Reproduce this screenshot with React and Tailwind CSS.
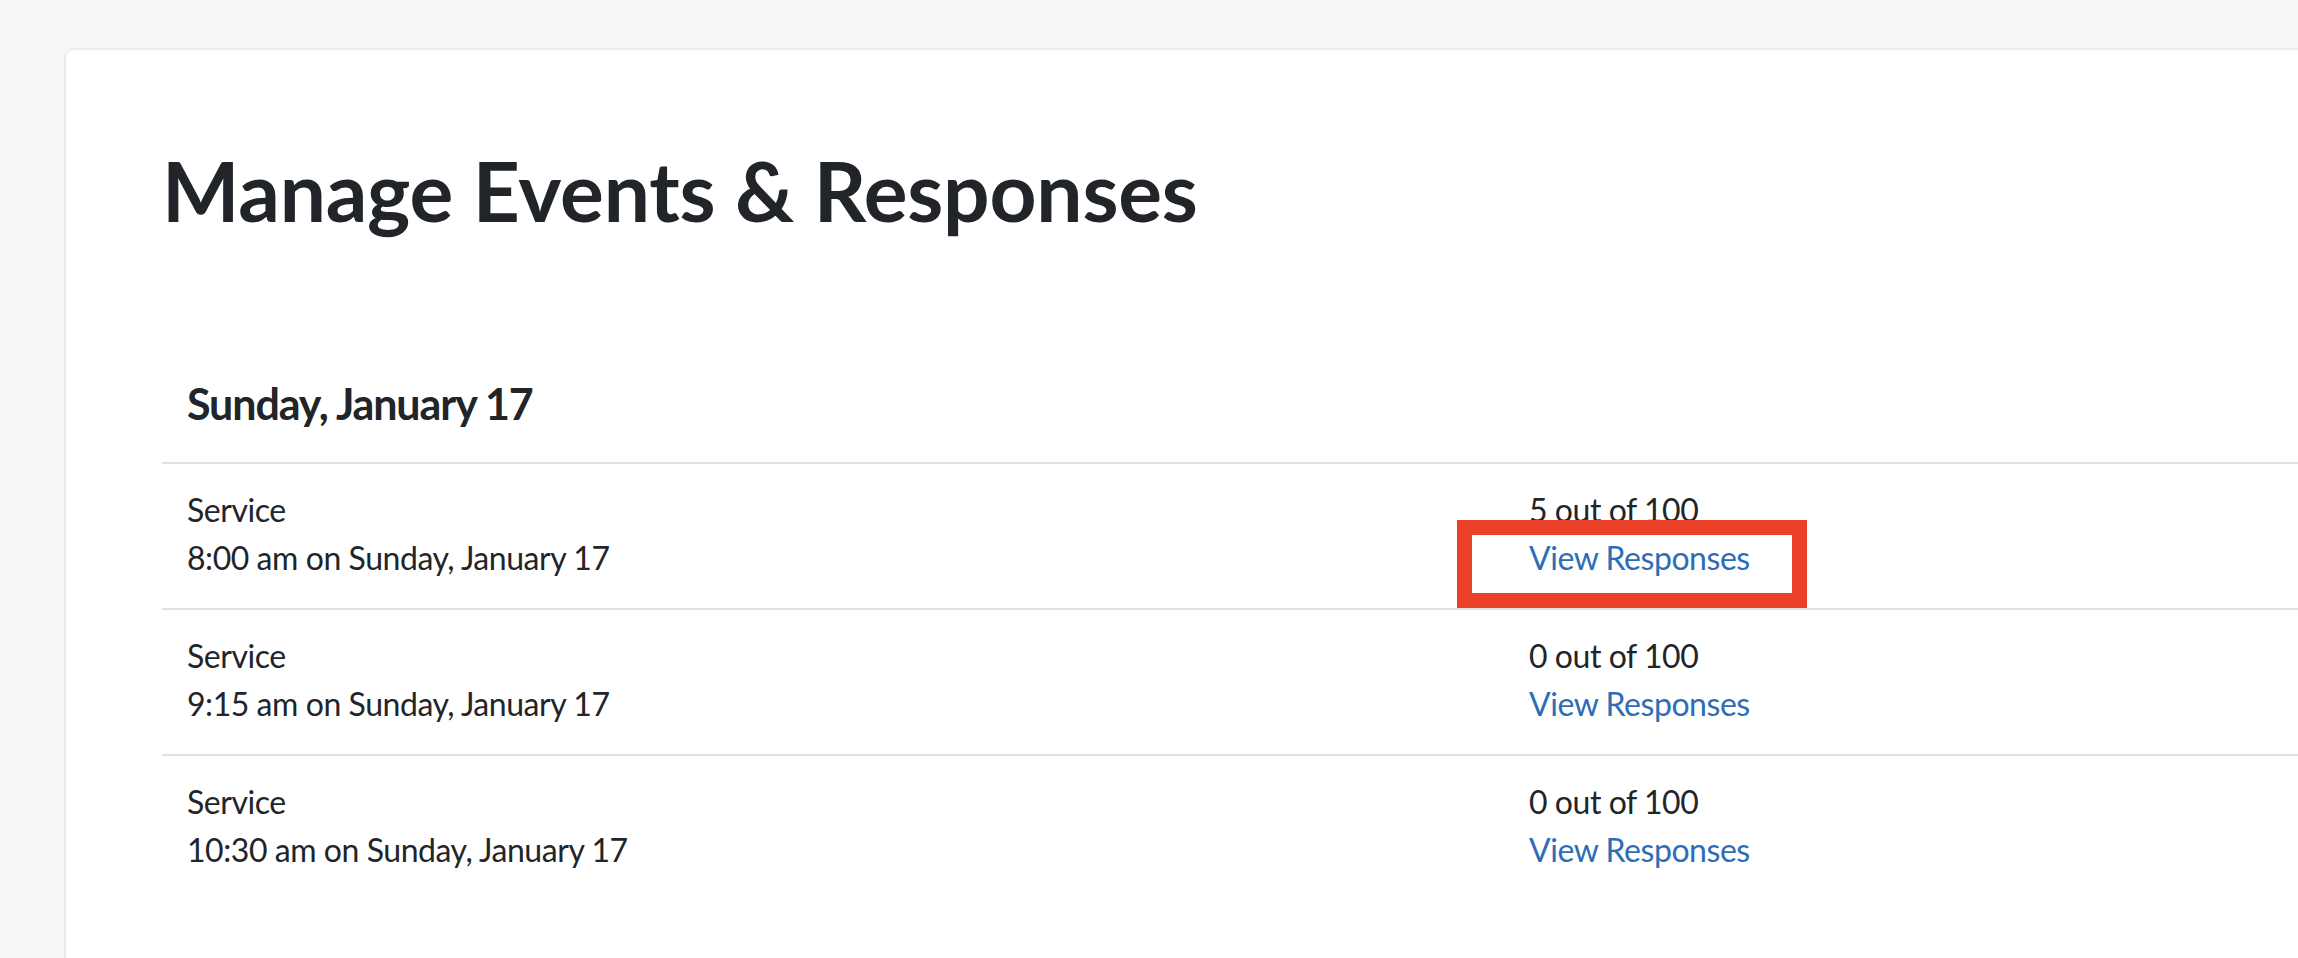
import React from 'react';

const events = [
  { time: '8:00 am', count: 5, highlight: true },
  { time: '9:15 am', count: 0 },
  { time: '10:30 am', count: 0 },
];

export default function App() {
  return (
    <div className="h-screen w-full overflow-hidden bg-[#f6f6f6] pt-[48px] pl-[64px] font-['Lato',sans-serif] text-[#212529]">
      <div className="w-[2700px] min-h-[1000px] rounded-[10px] border-2 border-[#ebebeb] bg-white pt-[91px] pl-[96px]">
        <h1 className="text-[82px] leading-[1.2] font-bold tracking-[-0.2px]">Manage Events &amp; Responses</h1>

        <h4 className="mt-[139px] pl-[25px] pb-[32px] text-[43px] leading-[1.2] font-bold tracking-[-1.1px]">Sunday, January 17</h4>

        <div>
          {events.map((ev) => (
            <div
              key={ev.time}
              className="flex border-t-2 border-[#dee2e6] text-[32px] leading-[48px] tracking-[-0.45px]"
            >
              <div className="w-[1343px] pl-[25px] pt-[22px] pb-[26px]">
                <div>Service</div>
                <div>{ev.time} on Sunday, January 17</div>
              </div>
              <div className="relative pl-[24px] pt-[22px] pb-[26px]">
                <div>{ev.count} out of 100</div>
                <a href="#" className="text-[#2d6db6]">View Responses</a>
                {ev.highlight && (
                  <div className="absolute left-[-48px] top-[56px] h-[88px] w-[350px] border-[15px] border-[#ea4128]" />
                )}
              </div>
            </div>
          ))}
        </div>
      </div>
    </div>
  );
}
